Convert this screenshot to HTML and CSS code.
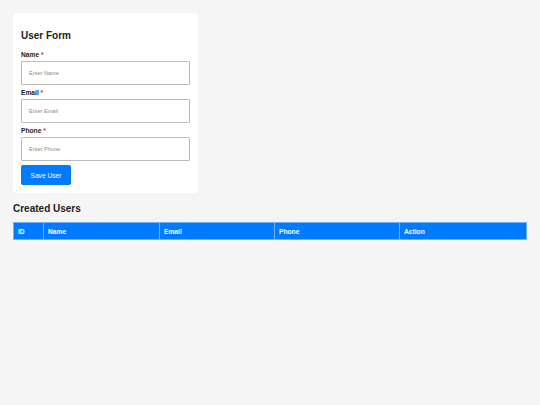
FILE: index.html
```html
<!DOCTYPE html>
<html lang="en">
<head>
    <meta charset="UTF-8">
    <meta name="viewport" content="width=device-width, initial-scale=1.0">
    <title>User Form</title>
    <link rel="stylesheet" href="styles.css">
</head>
<body>
    <!-- Form Card -->
    <div class="form-container">
        <h2>User Form</h2>

        <div class="form-group">
            <label for="name">Name <span class="required">*</span></label>
            <input type="text" id="name" name="name" placeholder="Enter Name">
        </div>

        <div class="form-group">
            <label for="email">Email <span class="required">*</span></label>
            <input type="text" id="email" name="email" placeholder="Enter Email">
        </div>

        <div class="form-group">
            <label for="phone">Phone <span class="required">*</span></label>
            <input type="text" id="phone" name="phone" placeholder="Enter Phone">
        </div>

        <button>Save User</button>
    </div>

    <!-- Users Table -->
    <h2 class="table-title">Created Users</h2>
    <table class="user-table">
        <thead>
            <tr>
                <th class="col-id">ID</th>
                <th class="col-name">Name</th>
                <th class="col-email">Email</th>
                <th class="col-phone">Phone</th>
                <th class="col-action">Action</th>
            </tr>
        </thead>
        <tbody id="userList">
        </tbody>
    </table>
</body>
</html>
```

FILE: styles.css
```css
/* General Styling */
body {
    font-family: 'Liberation Sans', Arial, sans-serif;
    margin: 0;
    padding: 13px;
    background: #f5f5f5;
    color: #222;
}

h2 {
    font-size: 10px;
    line-height: 11.5px;
    margin: 0;
}

/* Form Card */
.form-container {
    background: #fff;
    width: 169px;
    padding: 16.5px 8px 8px 8px;
    border-radius: 4px;
}

.form-container h2 {
    margin-bottom: 10px;
}

.form-group {
    display: flex;
    flex-direction: column;
    margin-bottom: 4.3px;
}

label {
    font-size: 6.67px;
    line-height: 7.7px;
    font-weight: bold;
    margin-bottom: 2.5px;
}

.required {
    color: #e02020;
}

input {
    height: 23.5px;
    box-sizing: border-box;
    padding: 0 7px;
    font-family: inherit;
    font-size: 5.6px;
    border: 1px solid #bbb;
    border-radius: 1px;
    outline: none;
}

input::placeholder {
    color: #8a8a8a;
}

button {
    display: block;
    width: 50px;
    height: 20px;
    padding: 0;
    font-family: inherit;
    font-size: 6.67px;
    background: #007bff;
    color: #fff;
    border: none;
    border-radius: 2px;
    cursor: pointer;
}

/* Table */
.table-title {
    margin-top: 9.5px;
    margin-bottom: 8px;
}

.user-table {
    width: 100%;
    border-collapse: collapse;
    table-layout: fixed;
}

.user-table th {
    height: 17px;
    box-sizing: border-box;
    padding: 0 4px;
    background: #007bff;
    color: #fff;
    font-size: 6.67px;
    font-weight: bold;
    text-align: left;
    border: 1px solid #6db2fb;
}

.col-id { width: 30px; }
.col-name { width: 116px; }
.col-email { width: 115px; }
.col-phone { width: 125px; }
```
